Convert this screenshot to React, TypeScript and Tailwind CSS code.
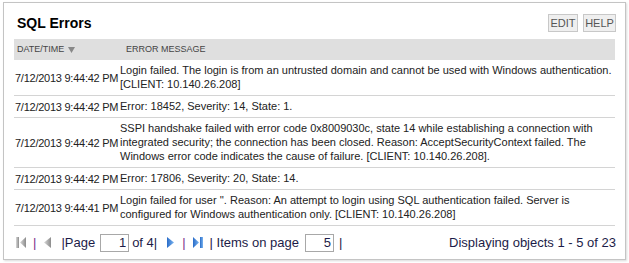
import React from "react";

const rows: { date: string; msg: string }[] = [
  {
    date: "7/12/2013 9:44:42 PM",
    msg: "Login failed. The login is from an untrusted domain and cannot be used with Windows authentication. [CLIENT: 10.140.26.208]",
  },
  { date: "7/12/2013 9:44:42 PM", msg: "Error: 18452, Severity: 14, State: 1." },
  {
    date: "7/12/2013 9:44:42 PM",
    msg: "SSPI handshake failed with error code 0x8009030c, state 14 while establishing a connection with integrated security; the connection has been closed. Reason: AcceptSecurityContext failed. The Windows error code indicates the cause of failure. [CLIENT: 10.140.26.208].",
  },
  { date: "7/12/2013 9:44:42 PM", msg: "Error: 17806, Severity: 20, State: 14." },
  {
    date: "7/12/2013 9:44:41 PM",
    msg: "Login failed for user ''. Reason: An attempt to login using SQL authentication failed. Server is configured for Windows authentication only. [CLIENT: 10.140.26.208]",
  },
];

function FirstIcon() {
  return (
    <svg width="11" height="11" viewBox="0 0 11 11">
      <defs>
        <linearGradient id="gg" x1="0" y1="0" x2="1" y2="0">
          <stop offset="0" stopColor="#d8d8d8" />
          <stop offset="1" stopColor="#8c8c8c" />
        </linearGradient>
      </defs>
      <rect x="0" y="0" width="3" height="11" fill="url(#gg)" />
      <polygon points="10,0 10,11 4,5.5" fill="url(#gg)" />
    </svg>
  );
}

function PrevIcon() {
  return (
    <svg width="7" height="11" viewBox="0 0 7 11">
      <defs>
        <linearGradient id="gp" x1="0" y1="0" x2="1" y2="0">
          <stop offset="0" stopColor="#d8d8d8" />
          <stop offset="1" stopColor="#8c8c8c" />
        </linearGradient>
      </defs>
      <polygon points="7,0 7,11 0,5.5" fill="url(#gp)" />
    </svg>
  );
}

function NextIcon() {
  return (
    <svg width="7" height="11" viewBox="0 0 7 11">
      <defs>
        <linearGradient id="gn" x1="0" y1="0" x2="1" y2="0">
          <stop offset="0" stopColor="#2a6cc8" />
          <stop offset="1" stopColor="#7ab4f0" />
        </linearGradient>
      </defs>
      <polygon points="0,0 0,11 7,5.5" fill="url(#gn)" />
    </svg>
  );
}

function LastIcon() {
  return (
    <svg width="10" height="11" viewBox="0 0 10 11">
      <defs>
        <linearGradient id="gl" x1="0" y1="0" x2="1" y2="0">
          <stop offset="0" stopColor="#2a6cc8" />
          <stop offset="1" stopColor="#7ab4f0" />
        </linearGradient>
      </defs>
      <polygon points="0,0 0,11 6,5.5" fill="url(#gl)" />
      <rect x="7" y="0" width="3" height="11" fill="url(#gl)" />
    </svg>
  );
}

export default function App() {
  return (
    <div className="w-[629px] h-[263px] bg-white pt-[2px] pl-[3px] font-['Liberation_Sans',Arial,sans-serif]">
      <div className="w-[623px] h-[258px] border border-[#c4c4c4] bg-white px-[10px] shadow-[1px_1px_2px_rgba(0,0,0,0.15)] flex flex-col">
        <div className="flex justify-between h-[36px]">
          <h1 className="mt-[12px] ml-[3px] text-[14px] leading-[16px] font-bold text-black">SQL Errors</h1>
          <div className="flex gap-[5px] mt-[11px] mr-[-1px] h-[18px]">
            <div className="w-[30px] h-[18px] border border-[#c8c8c8] bg-[#efefef] text-[11px] leading-[16px] text-center text-[#555]">EDIT</div>
            <div className="w-[33px] h-[18px] border border-[#c8c8c8] bg-[#efefef] text-[11px] leading-[16px] text-center text-[#555]">HELP</div>
          </div>
        </div>
        <div className="grid grid-cols-[106px_1fr] h-[21px] bg-[#dfdfdf] items-center text-[9px] text-[#444] uppercase">
          <div className="pl-[3px] flex items-center gap-[4px]">
            DATE/TIME
            <svg width="7" height="6" viewBox="0 0 7 6">
              <polygon points="0,0 7,0 3.5,6" fill="#888" />
            </svg>
          </div>
          <div className="pl-[6px]">ERROR MESSAGE</div>
        </div>
        {rows.map((r, i) => (
          <div key={i} className="grid grid-cols-[106px_1fr] border-b border-[#d4d4d4] text-[11px] leading-[14px] text-[#222]">
            <div className="pl-[1px] flex items-center tracking-[-0.25px] whitespace-nowrap">{r.date}</div>
            <div className="pt-[3px] pb-[4px] pr-[2px]">{r.msg}</div>
          </div>
        ))}
        <div className="flex-1 flex items-center text-[13px] text-[#1c1c48]">
          <span className="ml-[2px] flex"><FirstIcon /></span>
          <span className="ml-[6px] text-[#7b2b8b]">|</span>
          <span className="ml-[8px] flex"><PrevIcon /></span>
          <span className="ml-[10px]">|Page</span>
          <input readOnly value="1" className="ml-[5px] w-[29px] h-[18px] border border-[#a8a8a8] text-right pr-[2px] text-[13px] text-[#1c1c48] outline-none" />
          <span className="ml-[3px]">of 4|</span>
          <span className="ml-[10px] flex"><NextIcon /></span>
          <span className="ml-[8px] text-[#7b2b8b]">|</span>
          <span className="ml-[7px] flex"><LastIcon /></span>
          <span className="ml-[7px]">| Items on page</span>
          <input readOnly value="5" className="ml-[6px] w-[29px] h-[18px] border border-[#a8a8a8] text-right pr-[2px] text-[13px] text-[#1c1c48] outline-none" />
          <span className="ml-[5px]">|</span>
          <span className="ml-auto mr-[-1px]">Displaying objects 1 - 5 of 23</span>
        </div>
      </div>
    </div>
  );
}
